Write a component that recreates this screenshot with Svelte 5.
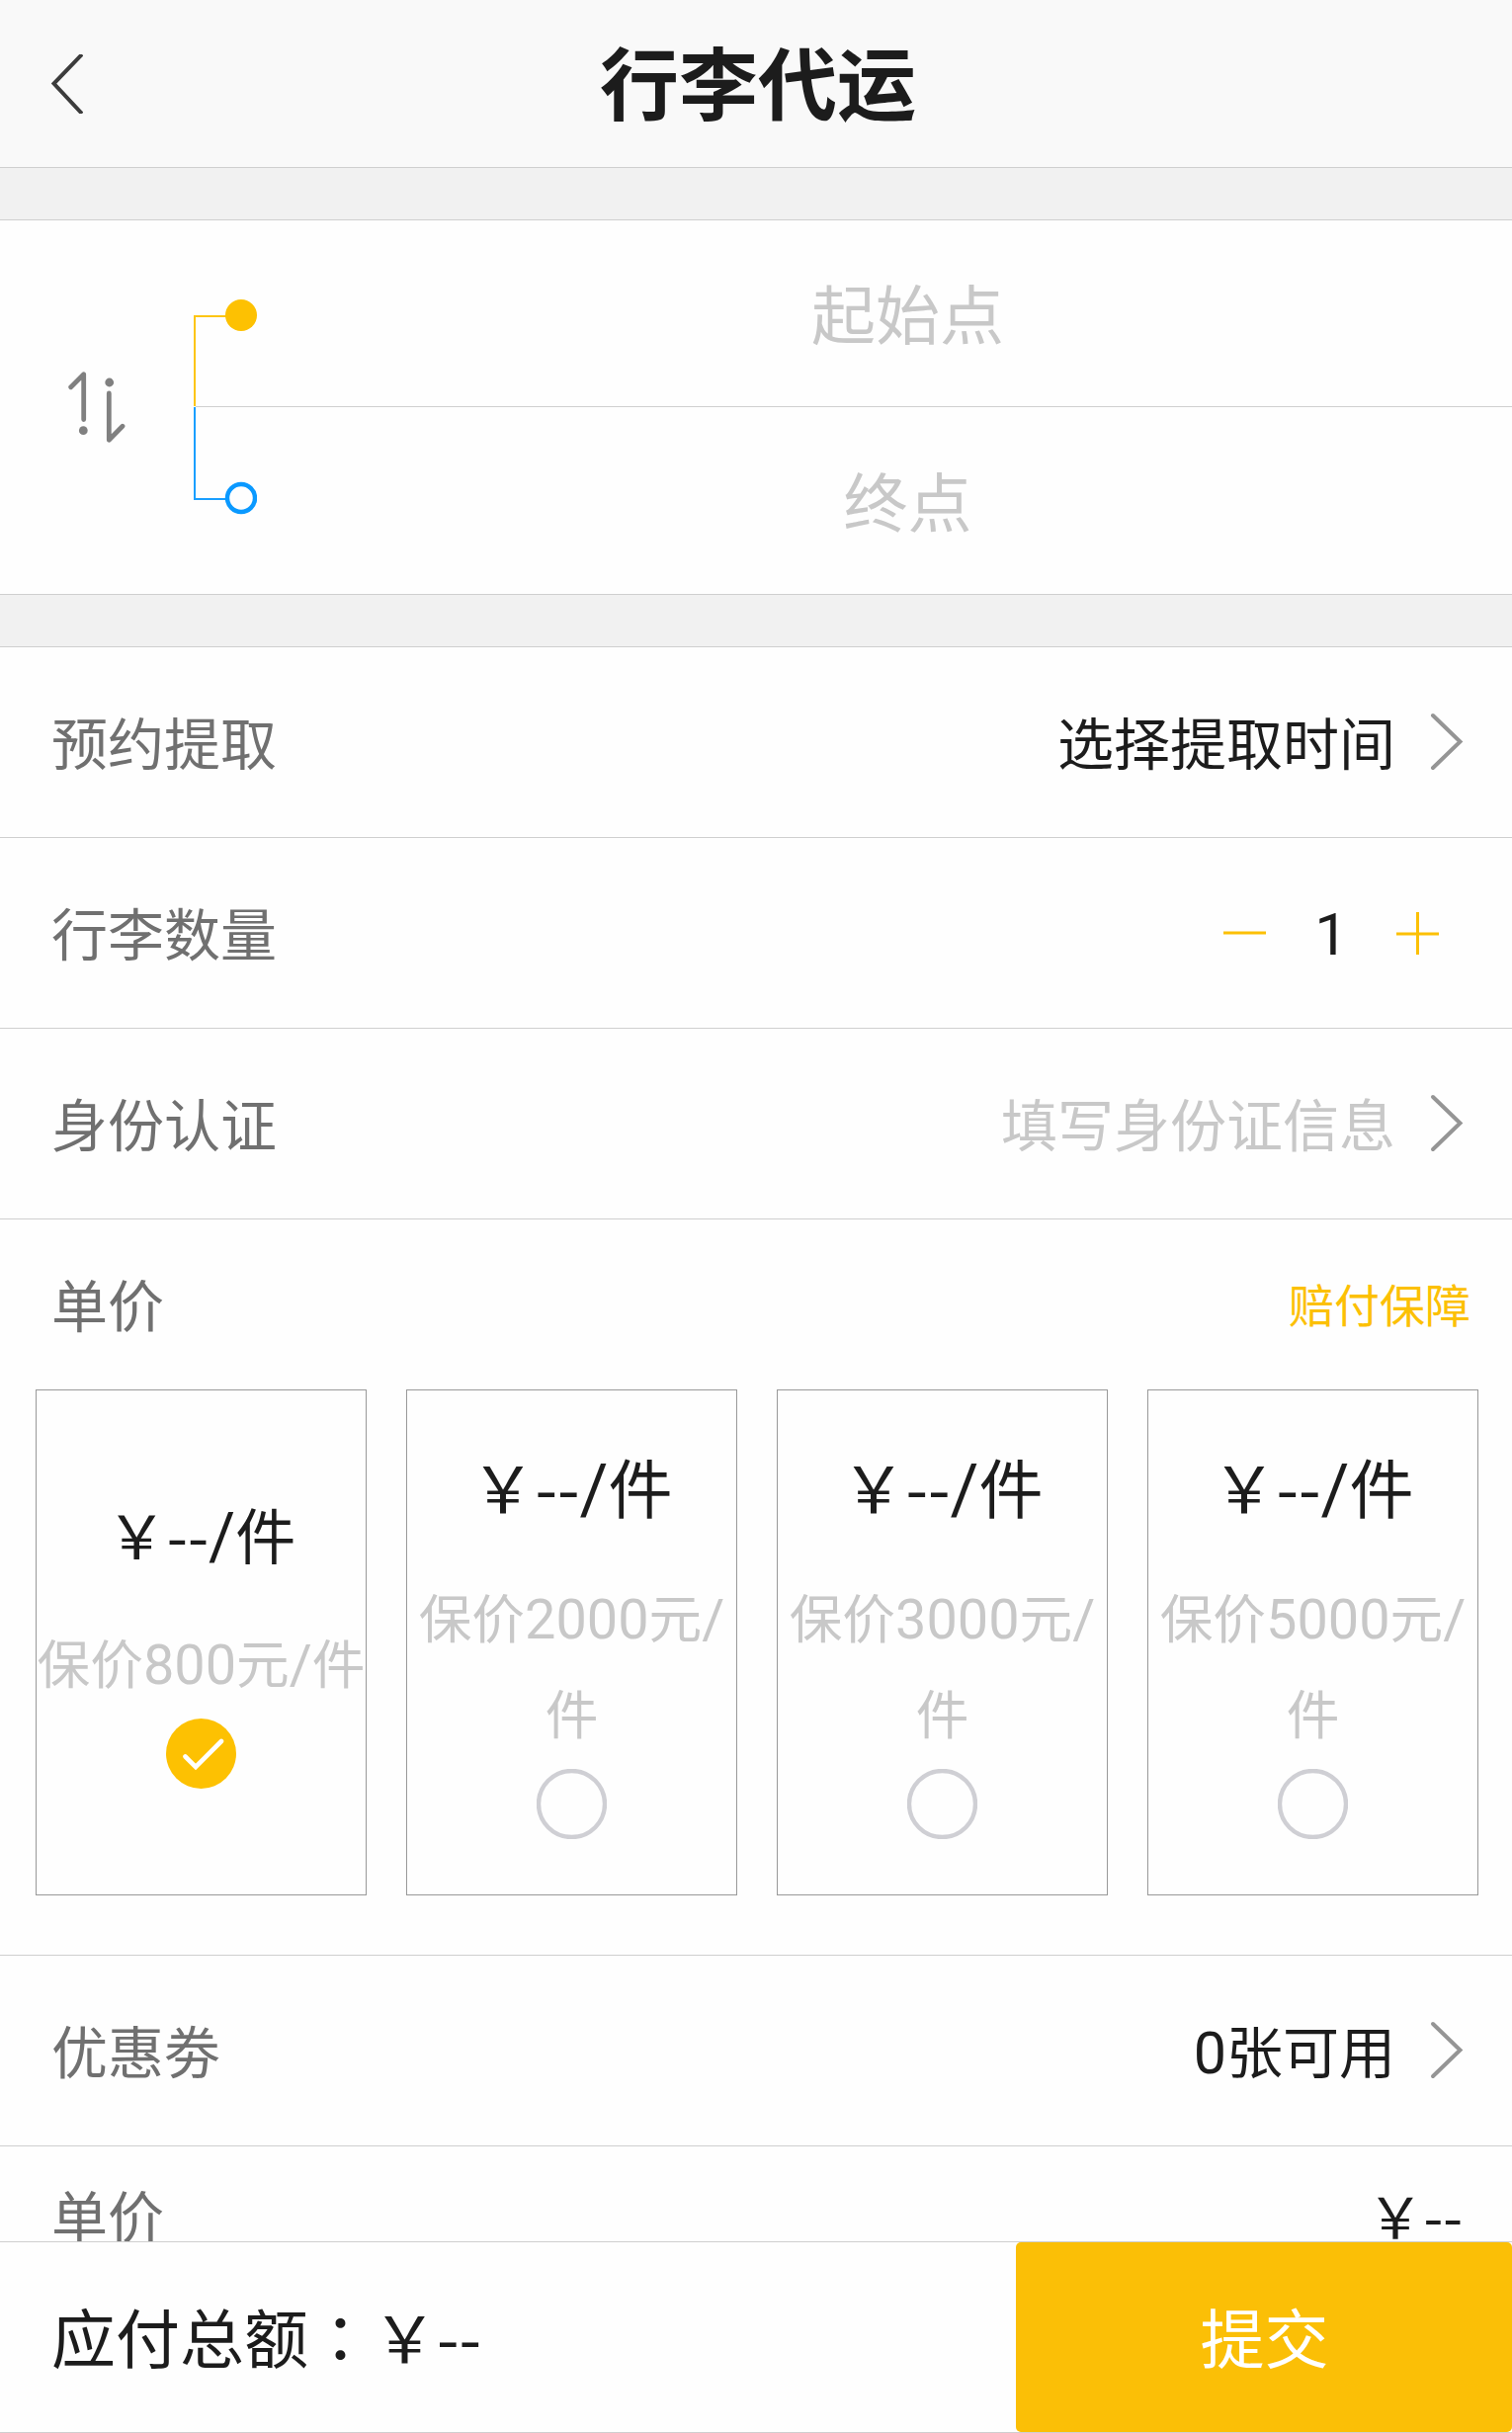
<script lang="ts">
  type PriceOption = {
    id: number
    price: string
    insured: number
  }

  const options: PriceOption[] = [
    { id: 0, price: '--', insured: 800 },
    { id: 1, price: '--', insured: 2000 },
    { id: 2, price: '--', insured: 3000 },
    { id: 3, price: '--', insured: 5000 }
  ]

  let count = $state(1)
  let selected = $state(0)

  const decrease = () => {
    if (count > 1) count -= 1
  }

  const increase = () => {
    count += 1
  }
</script>

{#snippet chevron()}
  <svg class="chevron" viewBox="0 0 34 62" aria-hidden="true">
    <path d="M3 4L30.5 30.5L3 57" />
  </svg>
{/snippet}

<div class="page">
  <header class="header">
    <button type="button" class="header__back" aria-label="返回">
      <svg viewBox="0 0 32 60" aria-hidden="true">
        <path d="M31 0L2.5 29.5L31 60" />
      </svg>
    </button>
    <h1>行李代运</h1>
  </header>

  <main class="content">
    <section class="route">
      <button type="button" class="route__swap" aria-label="交换">
        <svg viewBox="0 0 60 74" aria-hidden="true">
          <path d="M4.7 16.7L17.7 3.7V49.5M43.3 23V70.3L57 56.3" />
          <circle cx="17.3" cy="60.7" r="4.4" />
          <circle cx="43.7" cy="12" r="4.4" />
        </svg>
      </button>
      <svg class="route__line" viewBox="0 0 64 378" aria-hidden="true">
        <path class="from" d="M48 97H1V188" />
        <circle class="from-dot" cx="48" cy="96" r="16" />
        <path class="to" d="M32 282H1V189" />
        <circle class="to-dot" cx="48" cy="281" r="14" />
      </svg>
      <div class="route__points">
        <div class="route__point">起始点</div>
        <div class="route__point">终点</div>
      </div>
    </section>

    <div class="row">
      <span class="row__label">预约提取</span>
      <span class="row__value">选择提取时间</span>
      {@render chevron()}
    </div>

    <div class="row">
      <span class="row__label">行李数量</span>
      <div class="stepper">
        <button type="button" aria-label="减少" onclick={decrease}>
          <svg viewBox="0 0 43 43" aria-hidden="true"><path d="M0 21H43" /></svg>
        </button>
        <span class="stepper__count">{count}</span>
        <button type="button" aria-label="增加" onclick={increase}>
          <svg viewBox="0 0 43 43" aria-hidden="true"><path d="M0 22H43M21.5 0V43" /></svg>
        </button>
      </div>
    </div>

    <div class="row">
      <span class="row__label">身份认证</span>
      <span class="row__value row__value--empty">填写身份证信息</span>
      {@render chevron()}
    </div>

    <section class="pricing">
      <div class="pricing__header">
        <span class="row__label">单价</span>
        <span class="pricing__link">赔付保障</span>
      </div>
      <div class="pricing__options">
        {#each options as option (option.id)}
          <button
            type="button"
            class="option"
            class:option--selected={selected === option.id}
            onclick={() => (selected = option.id)}
          >
            <span class="option__price">￥{option.price}<span class="num num--slash">/</span>件</span>
            <span class="option__insured">保价<span class="num">{option.insured}</span>元<span class="num">/</span>件</span>
            <svg class="option__radio" viewBox="0 0 71 71" aria-hidden="true">
              {#if selected === option.id}
                <circle class="checked" cx="35.5" cy="35.5" r="35.5" />
                <path d="M19.5 38.5L30 49L56 23" />
              {:else}
                <circle class="empty" cx="35.5" cy="35.5" r="33.5" />
              {/if}
            </svg>
          </button>
        {/each}
      </div>
    </section>

    <div class="row">
      <span class="row__label">优惠劵</span>
      <span class="row__value"><span class="num">0</span>张可用</span>
      {@render chevron()}
    </div>

    <div class="summary">
      <span class="row__label">单价</span>
      <span class="summary__value">￥--</span>
    </div>
  </main>

  <footer class="footer">
    <div class="footer__total">应付总额<span class="colon">：</span>￥--</div>
    <button type="button" class="footer__submit">提交</button>
  </footer>
</div>

<style>
  :global(body) {
    margin: 0;
    background: #fff;
  }

  .page {
    display: flex;
    flex-direction: column;
    height: 2462px;
    overflow: hidden;
    color: #1c1c1c;
    background: #fefefe;
    font-family: 'Noto Sans CJK SC', sans-serif;
    font-size: 57px;
  }

  button {
    padding: 0;
    border: 0;
    background: none;
    color: inherit;
    font: inherit;
    cursor: pointer;
  }

  svg {
    display: block;
    flex: none;
    fill: none;
  }

  .num {
    font-family: Roboto, sans-serif;
    font-size: 1.04em;
    line-height: 0;
  }

  .num--slash {
    font-size: 1.08em;
  }

  .header {
    display: grid;
    grid-template-columns: 120px 1fr 120px;
    align-items: center;
    flex: none;
    height: 169px;
    border-bottom: 1px solid #cfcfcf;
    background: #f9f9f9;
  }

  .header__back {
    padding-left: 52px;
  }

  .header__back svg {
    width: 32px;
    height: 60px;
    stroke: #3c3c3c;
    stroke-width: 4;
  }

  .header h1 {
    margin: 0;
    padding: 0 0 10px 4px;
    font-size: 80px;
    font-weight: 700;
    line-height: 1;
    text-align: center;
  }

  .content {
    flex: 1;
    min-height: 0;
    overflow: hidden;
  }

  .route {
    display: flex;
    height: 378px;
    border: solid #cfcfcf;
    border-width: 1px 0;
    box-shadow: 0 -52px #f1f1f1;
    margin: 52px 0;
  }

  .route__swap {
    display: flex;
    align-items: center;
    width: 196px;
    padding-left: 67px;
  }

  .route__swap svg {
    width: 60px;
    height: 74px;
    stroke: #808080;
    stroke-width: 4.8;
    stroke-linecap: round;
    stroke-linejoin: round;
  }

  .route__swap circle {
    fill: #808080;
    stroke: none;
  }

  .route__line {
    width: 64px;
    height: 378px;
    stroke-width: 2;
  }

  .route__line .from {
    stroke: #fdc513;
  }

  .route__line .from-dot {
    fill: #fdc102;
  }

  .route__line .to {
    stroke: #1a9fff;
  }

  .route__line .to-dot {
    stroke: #0a99ff;
    stroke-width: 4.4;
  }

  .route__points {
    flex: 1;
    margin-left: -62px;
  }

  .route__point {
    display: flex;
    align-items: center;
    justify-content: center;
    box-sizing: border-box;
    height: 189px;
    padding: 0 0 4px 109px;
    color: #c8c8c8;
    font-size: 65px;
  }

  .route__point:first-child {
    border-bottom: 1px solid #cfcfcf;
  }

  .row {
    display: flex;
    align-items: center;
    height: 192px;
    padding: 0 49px 0 52px;
    border-bottom: 1px solid #cfcfcf;
  }

  .route + .row {
    border-top: 1px solid #cfcfcf;
    box-shadow: 0 -52px #f1f1f1;
  }

  .row__label {
    flex: 1;
    padding-bottom: 4px;
    color: #707070;
  }

  .row__value {
    padding-bottom: 4px;
  }

  .row__value--empty {
    color: #c8c8c8;
  }

  .chevron {
    width: 34px;
    height: 62px;
    margin-left: 35px;
    stroke: #959595;
    stroke-width: 4;
    stroke-linecap: round;
  }

  .stepper {
    display: flex;
    align-items: center;
    padding-right: 25px;
  }

  .stepper svg {
    width: 43px;
    height: 43px;
    stroke: #fcc004;
    stroke-width: 3;
  }

  .stepper__count {
    width: 132px;
    padding-top: 2px;
    font-family: Roboto, sans-serif;
    font-size: 60px;
    text-align: center;
  }

  .pricing {
    height: 744px;
    border-bottom: 1px solid #cfcfcf;
  }

  .pricing__header {
    display: flex;
    align-items: center;
    height: 172px;
    padding: 0 42px 0 52px;
  }

  .pricing__link {
    padding-bottom: 4px;
    color: #fcc004;
    font-size: 46px;
  }

  .pricing__options {
    display: grid;
    grid-template-columns: repeat(4, 1fr);
    gap: 40px;
    padding: 0 34px 0 36px;
  }

  .option {
    display: flex;
    flex-direction: column;
    align-items: center;
    justify-content: center;
    height: 512px;
    padding-bottom: 3px;
    border: 1px solid #999;
  }

  .option__price {
    margin-bottom: 39px;
    font-size: 65px;
    line-height: 87px;
  }

  .option--selected .option__price {
    font-size: 61px;
    line-height: 82px;
  }

  .option__insured {
    align-self: stretch;
    margin: 0 -4px 10px;
    color: #c8c8c8;
    font-size: 53.7px;
    line-height: 97px;
    text-align: center;
  }

  .option__radio {
    width: 71px;
    height: 71px;
  }

  .option__radio .checked {
    fill: #fdc102;
  }

  .option__radio .empty {
    stroke: #cfcfd4;
    stroke-width: 4.4;
  }

  .option__radio path {
    stroke: #fff;
    stroke-width: 4.6;
    stroke-linecap: round;
  }

  .summary {
    display: flex;
    align-items: center;
    height: 142px;
    padding: 0 50px 0 52px;
  }

  .summary .row__label,
  .summary__value {
    padding-bottom: 7px;
  }

  .footer {
    display: flex;
    flex: none;
    height: 192px;
    border: solid #cfcfcf;
    border-width: 1px 0;
  }

  .footer__total {
    display: flex;
    align-items: center;
    flex: 1;
    padding: 0 0 4px 52px;
    font-size: 65px;
  }

  .colon {
    font-family: 'Noto Sans CJK TC', sans-serif;
  }

  .footer__submit {
    width: 502px;
    padding: 0 0 4px 1px;
    border-radius: 5px;
    background: #fbbf06;
    color: #fff;
    font-size: 65px;
  }
</style>
